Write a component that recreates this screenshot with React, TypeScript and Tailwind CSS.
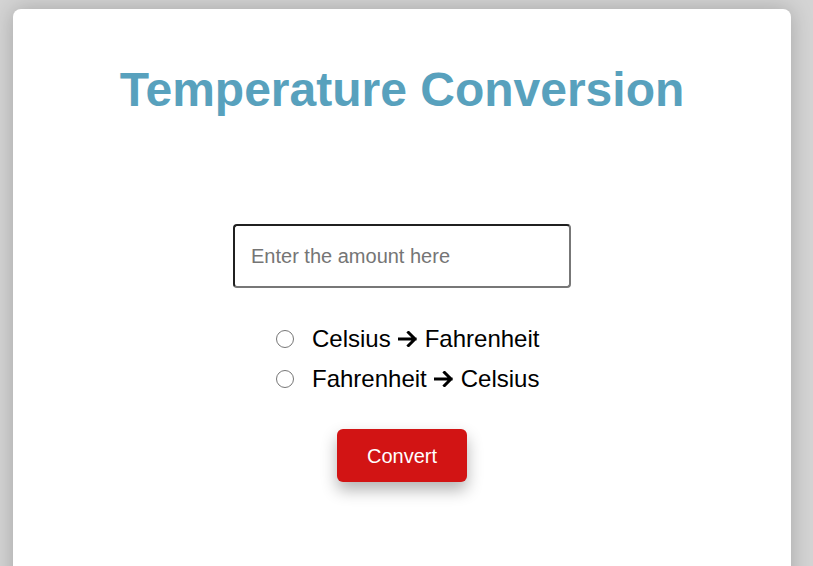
import { useState } from "react";

function Arrow() {
  return (
    <svg width="20" height="16" viewBox="0 0 20 16" className="mx-[7px] shrink-0">
      <path d="M1 8h16M10.5 1.5 17 8l-6.5 6.5" fill="none" stroke="#000" strokeWidth="3" strokeLinecap="square" />
    </svg>
  );
}

const options = [
  { id: "c2f", from: "Celsius", to: "Fahrenheit" },
  { id: "f2c", from: "Fahrenheit", to: "Celsius" },
];

export default function App() {
  const [amount, setAmount] = useState("");
  const [mode, setMode] = useState<string | null>(null);

  return (
    <div className="h-screen overflow-hidden bg-[#d4d4d4] pt-[9px] pl-[13px] font-['Liberation_Sans',Arial,sans-serif]">
      <div className="flex h-[620px] w-[778px] flex-col items-center rounded-[8px] bg-white pt-[53px] shadow-[0_0_22px_rgba(0,0,0,0.22)]">
        <h1 className="text-[48px] font-bold leading-[55px] text-[#58a1bd]">Temperature Conversion</h1>

        <input
          type="text"
          value={amount}
          onChange={(e) => setAmount(e.target.value)}
          placeholder="Enter the amount here"
          className="mt-[107px] h-[64px] w-[338px] rounded-[4px] border-2 border-t-[#202020] border-l-[#202020] border-b-[#777] border-r-[#777] px-[16px] text-[20px] text-black outline-none placeholder:text-[#757575]"
        />

        <div className="mt-[31px] flex w-[276px] flex-col pl-[12px]">
          {options.map((o) => (
            <label key={o.id} className="flex h-[40px] cursor-pointer items-center text-[24px] text-black">
              <input
                type="radio"
                name="mode"
                checked={mode === o.id}
                onChange={() => setMode(o.id)}
                className="m-0 h-[18px] w-[18px] shrink-0 appearance-none rounded-full border-[1.5px] border-[#767676] bg-white checked:border-[5px] checked:border-[#1a73e8]"
              />
              <span className="ml-[18px]">{o.from}</span>
              <Arrow />
              <span>{o.to}</span>
            </label>
          ))}
        </div>

        <button className="mt-[30px] h-[53px] w-[130px] rounded-[6px] bg-[#d21414] text-[20px] text-white shadow-[0_8px_16px_rgba(0,0,0,0.3)]">
          Convert
        </button>
      </div>
    </div>
  );
}
